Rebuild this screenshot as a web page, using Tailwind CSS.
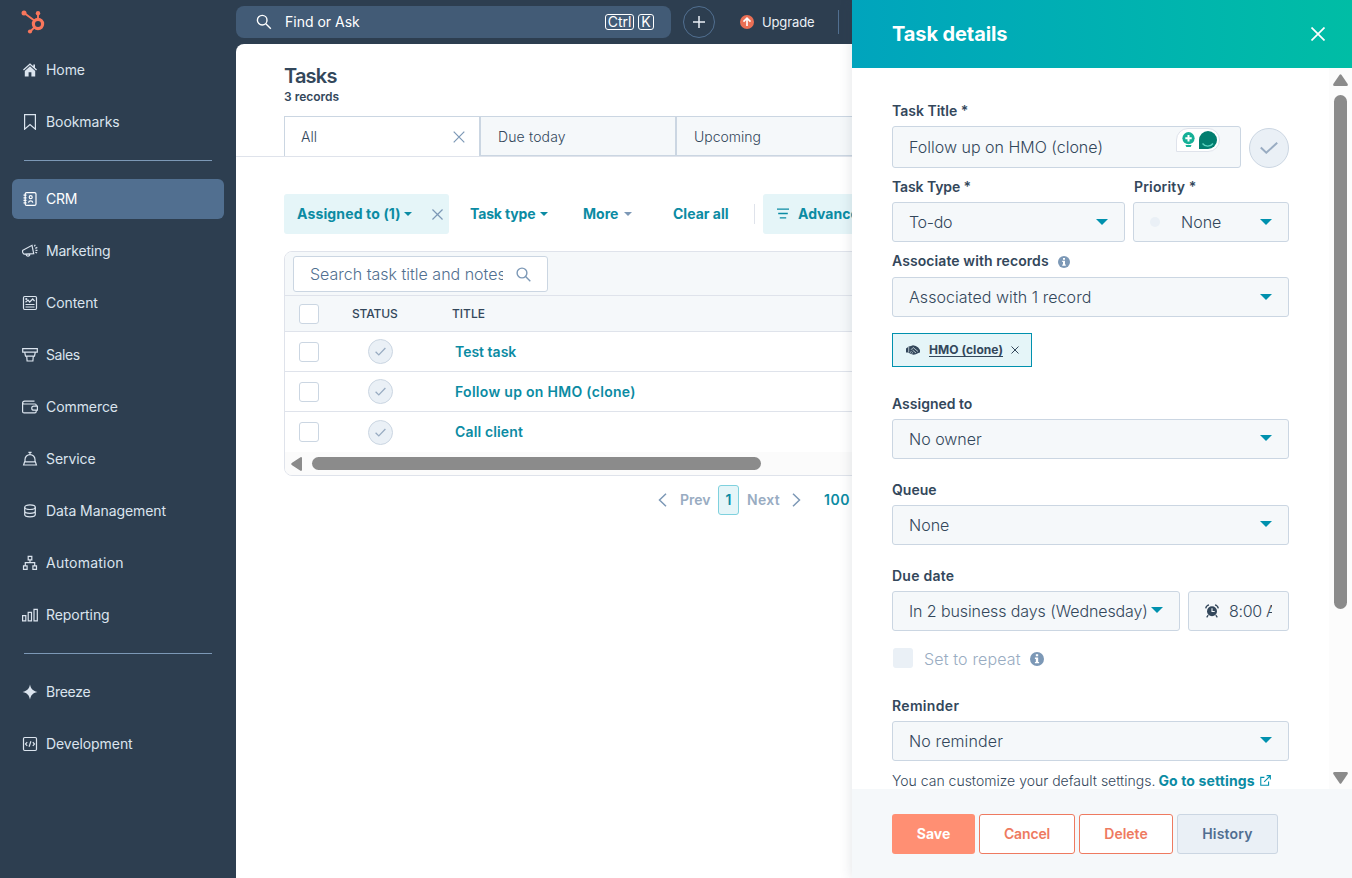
<!DOCTYPE html>
<html lang="en">
<head>
    <meta charset="UTF-8">
    <meta name="viewport" content="width=device-width, initial-scale=1.0">
    <title>Tasks</title>
    <script src="https://cdn.jsdelivr.net/npm/@tailwindcss/browser@4"></script>
</head>
<body class="relative flex h-screen overflow-hidden bg-[#2d3e50] font-['Inter',sans-serif] text-[#33475b]">

    <!-- Sidebar -->
    <nav class="w-[236px] shrink-0 text-sm tracking-[-0.005em] text-[#dbe4ee]">
        <div class="flex h-[50px] pl-[20px] pt-[9px]">
            <svg class="h-[26px] w-[26px]" viewBox="0 0 26 26" fill="none" stroke="#f8765c">
                <circle cx="18" cy="15" r="4.600" stroke-width="3.200"/>
                <path d="M18 10.500V4.500M14.300 11.500 4.500 4.200M14.600 18.200l-4.300 4.300" stroke-width="1.900"/>
                <circle cx="4" cy="4" r="2.500" fill="#f8765c" stroke="none"/>
                <circle cx="18" cy="4.200" r="2.200" fill="#f8765c" stroke="none"/>
                <circle cx="10" cy="22.500" r="2.100" fill="#f8765c" stroke="none"/>
            </svg>
        </div>
        <ul class="flex flex-col gap-3 px-3">
            <li class="flex h-10 items-center gap-2 pl-[10px]">
                <svg class="h-4 w-4" viewBox="0 0 16 16" fill="currentColor"><path d="M8 1.200 1 7.600l.9.900L8 3l6.100 5.500.9-.9-2-1.800V2.500h-1.700v1.700z"/><path d="M8 4.200 2.800 8.900v5.600H6.600V10.300h2.800v4.200h3.800V8.900z"/></svg>
                Home
            </li>
            <li class="flex h-10 items-center gap-2 pl-[10px]">
                <svg class="h-4 w-4" viewBox="0 0 16 16" fill="none" stroke="currentColor" stroke-width="1.200"><path d="M2.600.6h10.800v14.600L8 10.500l-5.400 4.700z"/></svg>
                Bookmarks
            </li>
        </ul>
        <div class="mx-6 mt-[18px] mb-[18px] h-px bg-[#7c98b6]"></div>
        <ul class="flex flex-col gap-3 px-3">
            <li class="flex h-10 items-center gap-2 rounded-md bg-[#516f90] pl-[10px] tracking-[-0.02em] text-white">
                <svg class="h-4 w-4" viewBox="0 0 16 16" fill="none" stroke="currentColor" stroke-width="1.200"><rect x="3.200" y="1.600" width="10.800" height="12.800" rx="1.500"/><path d="M1.500 4.200h3M1.500 6.800h3M1.500 9.300h3M1.500 11.900h3M6.500 11.600c.4-2.200 3.900-2.200 4.300 0"/><circle cx="8.700" cy="6.200" r="1.500"/></svg>
                CRM
            </li>
            <li class="flex h-10 items-center gap-2 pl-[10px] tracking-[-0.015em]">
                <svg class="h-4 w-4" viewBox="0 0 16 16" fill="none" stroke="currentColor" stroke-width="1.200"><path d="M.9 7.200 10 2.300l1.700 8.300-9.400.6C1 11.200 0 8.400.9 7.200zM4 11.200c.2 2.600 3.800 2.600 3.800-.2M12.300 3.400l1-1.700M13.300 5.400l2-1M13.500 7.400h2M13.300 9.200l1.800.7"/></svg>
                Marketing
            </li>
            <li class="flex h-10 items-center gap-2 pl-[10px]">
                <svg class="h-4 w-4" viewBox="0 0 16 16" fill="none" stroke="currentColor" stroke-width="1.200"><rect x="1.500" y="1.500" width="13" height="13" rx="1.200"/><path d="M3.500 7.200 6 5l1.700 2 3-3 1.900 2.200M3.500 9.500h9M3.500 12h9"/><circle cx="4.300" cy="4" r=".5"/></svg>
                Content
            </li>
            <li class="flex h-10 items-center gap-2 pl-[10px] tracking-[-0.03em]">
                <svg class="h-4 w-4" viewBox="0 0 16 16" fill="none" stroke="currentColor" stroke-width="1.200"><path d="M.7 1.700h14.600v3.400H.7zM2.700 5.100l.8 4.100h9l.8-4.100M4.700 9.200l.4 4.800h5.800l.4-4.800"/></svg>
                Sales
            </li>
            <li class="flex h-10 items-center gap-2 pl-[10px]">
                <svg class="h-4 w-4" viewBox="0 0 16 16" fill="none" stroke="currentColor" stroke-width="1.200"><path d="M12.500 2.200H2.600C1.300 2.200.6 3 .6 4v8.400c0 .9.600 1.500 1.500 1.500h10.800c.8 0 1.300-.5 1.300-1.300v-1.400M.6 4c0 .6.700 1 1.500 1h11c.7 0 1.100.5 1.100 1.100v1M15.400 7.100h-3.600a2 2 0 0 0 0 4.100h3.600z"/></svg>
                Commerce
            </li>
            <li class="flex h-10 items-center gap-2 pl-[10px]">
                <svg class="h-4 w-4" viewBox="0 0 16 16" fill="none" stroke="currentColor" stroke-width="1.200"><path d="M6.400 1.300h3.200M8 1.300V3.600M3 10.600V8.500a5 4.900 0 0 1 10 0v2.100M2.600 10.800h10.800l1 3.200H1.600z"/></svg>
                Service
            </li>
            <li class="flex h-10 items-center gap-2 pl-[10px]">
                <svg class="h-4 w-4" viewBox="0 0 16 16" fill="none" stroke="currentColor" stroke-width="1.200"><ellipse cx="8" cy="4.200" rx="5.300" ry="2.300"/><path d="M2.700 4.200v7.400c0 3.100 10.600 3.100 10.600 0V4.200M2.700 8c0 3.100 10.600 3.100 10.600 0"/></svg>
                Data Management
            </li>
            <li class="flex h-10 items-center gap-2 pl-[10px] tracking-[0.016em]">
                <svg class="h-4 w-4" viewBox="0 0 16 16" fill="none" stroke="currentColor" stroke-width="1.200"><path d="M6.200 1.400h3.600v3.500H6.200zM1.500 10.800h3.600v3.500H1.500zM10.900 10.800h3.600v3.500h-3.600zM8 4.900v2.700M3.300 10.800V7.700h9.400v3.100"/></svg>
                Automation
            </li>
            <li class="flex h-10 items-center gap-2 pl-[10px]">
                <svg class="h-4 w-4" viewBox="0 0 16 16" fill="none" stroke="currentColor" stroke-width="1.200"><path d="M.6 8.600h3.200v5.300H.6zM6.200 5.300h3.300v8.600H6.200zM12 2.300h3.300v11.600H12z"/></svg>
                Reporting
            </li>
        </ul>
        <div class="mx-6 mt-[18px] mb-[18px] h-px bg-[#7c98b6]"></div>
        <ul class="flex flex-col gap-3 px-3">
            <li class="flex h-10 items-center gap-2 pl-[10px] tracking-[-0.02em]">
                <svg class="h-4 w-4" viewBox="0 0 16 16" fill="currentColor"><path d="M8 .6c.9 4 2.300 6.200 7.400 7.400C10.300 9.200 8.900 11.400 8 15.400 7.100 11.400 5.700 9.200.6 8 5.700 6.800 7.100 4.600 8 .6z"/></svg>
                Breeze
            </li>
            <li class="flex h-10 items-center gap-2 pl-[10px]">
                <svg class="h-4 w-4" viewBox="0 0 16 16" fill="none" stroke="currentColor" stroke-width="1.200"><rect x="1.500" y="1.500" width="13" height="13" rx="1.200"/><path d="M5.200 6.200 3.500 8l1.700 1.800M10.800 6.200 12.500 8l-1.700 1.800M8.900 5.300 7.100 10.700"/></svg>
                Development
            </li>
        </ul>
    </nav>

    <main class="flex min-w-0 flex-1 flex-col">
        <!-- Top bar -->
        <header class="flex h-11 shrink-0 items-center">
            <div class="flex h-8 w-[435px] items-center rounded-lg bg-[#425b76] pr-[17px] pl-5 text-sm text-white">
                <svg class="h-4 w-4" viewBox="0 0 16 16" fill="none" stroke="currentColor" stroke-width="1.400"><circle cx="6.200" cy="6.200" r="4.800"/><path d="m9.800 9.800 5 5"/></svg>
                <span class="ml-[13px] flex-1">Find or Ask</span>
                <kbd class="flex h-4 w-[29px] items-center justify-center rounded-[3px] border border-white font-['Inter',sans-serif]">Ctrl</kbd>
                <kbd class="ml-1 flex h-4 w-4 items-center justify-center rounded-[3px] border border-white font-['Inter',sans-serif]">K</kbd>
            </div>
            <div class="ml-3 flex h-8 w-8 items-center justify-center rounded-full border border-[#516f90]">
                <svg class="h-3 w-3" viewBox="0 0 12 12" stroke="#eaf0f6" stroke-width="1.500"><path d="M6 0v12M0 6h12"/></svg>
            </div>
            <svg class="ml-[25px] h-[14px] w-[14px]" viewBox="0 0 14 14" fill="none"><circle cx="7" cy="7" r="7" fill="#ea6f55"/><path d="M7 11V3.300M3.500 6.600 7 3.100l3.500 3.500" stroke="#fff" stroke-width="1.600"/></svg>
            <span class="mt-px ml-2 w-[53px] text-[13px] tracking-[-0.01em] text-[#eaf0f6]">Upgrade</span>
            <div class="ml-[23px] h-6 w-px bg-[#516f90]"></div>
        </header>

        <div class="flex-1 rounded-tl-lg bg-white">
            <div class="h-[72px] pt-5 pl-12">
                <h1 class="text-xl leading-6 font-semibold tracking-[-0.04em]">Tasks</h1>
                <p class="text-xs leading-[18px] font-semibold">3 records</p>
            </div>

            <!-- View tabs -->
            <div class="flex h-[41px] border-b border-[#dfe3eb] pl-12 text-sm font-light">
                <div class="flex h-10 w-[195px] items-center justify-between border-t border-l border-[#cbd6e2] pr-[14px] pl-4">
                    All
                    <svg class="h-3 w-3" viewBox="0 0 12 12" stroke="#7c98b6" stroke-width="1.200"><path d="m.7.700 10.600 10.600M11.300.700.7 11.300"/></svg>
                </div>
                <div class="flex h-10 w-[196px] items-center border-y border-l-2 border-[#cbd6e2] bg-[#f5f8fa] pt-px pl-[17px] tracking-[0.01em]">Due today</div>
                <div class="flex h-10 w-[196px] items-center border-y border-l-2 border-[#cbd6e2] bg-[#f5f8fa] pt-px pl-[17px]">Upcoming</div>
            </div>

            <!-- Filters -->
            <div class="mt-[37px] flex h-10 items-center overflow-hidden pl-12 text-sm font-bold whitespace-nowrap text-[#0b8ba3]">
                <div class="flex h-10 w-[165px] items-center rounded-[3px] bg-[#e5f5f8] pl-[13px]">
                    <span class="w-[107px] tracking-[0.01em]">Assigned to (1)</span>
                    <svg class="h-1 w-2" viewBox="0 0 8 4" fill="currentColor"><path d="M0 0h8L4 4z"/></svg>
                    <svg class="ml-5 h-[11px] w-[11px]" viewBox="0 0 12 12" stroke="#7c98b6" stroke-width="1.300"><path d="m.5.500 11 11M11.500.500l-11 11"/></svg>
                </div>
                <span class="ml-[21px] w-[70px] tracking-[-0.01em]">Task type</span>
                <svg class="h-1 w-2" viewBox="0 0 8 4" fill="currentColor"><path d="M0 0h8L4 4z"/></svg>
                <span class="ml-[35px] w-[41px]">More</span>
                <svg class="h-1 w-2" viewBox="0 0 8 4" fill="#7c98b6"><path d="M0 0h8L4 4z"/></svg>
                <span class="ml-[41px] w-[81px]">Clear all</span>
                <div class="h-5 w-px bg-[#dfe3eb]"></div>
                <div class="ml-2 flex h-10 items-center gap-[9px] rounded-[3px] bg-[#e5f5f8] px-[14px]">
                    <svg class="h-3 w-3" viewBox="0 0 12 12" stroke="currentColor" stroke-width="1.300"><path d="M0 1.200h12M1.200 5.500h9.600M2.800 9.800h6.400"/></svg>
                    <span>Advanced filters</span>
                </div>
            </div>

            <!-- Task table -->
            <div class="mt-[17px] ml-12 overflow-hidden rounded-l-lg border border-[#dfe3eb]">
                <div class="flex h-[43px] items-start bg-[#f5f8fa] pt-1 pl-2">
                    <div class="flex h-9 w-[255px] items-center rounded-[3px] border border-[#cbd6e2] bg-white pl-4">
                        <span class="w-[193px] overflow-hidden font-light whitespace-nowrap text-[#516f90]">Search task title and notes</span>
                        <svg class="ml-[13px] h-[15px] w-[15px]" viewBox="0 0 15 15" fill="none" stroke="#7c98b6" stroke-width="1.400"><circle cx="6" cy="6" r="4.900"/><path d="m9.600 9.600 4.700 4.700"/></svg>
                    </div>
                </div>
                <div class="flex h-[37px] items-center border-y border-[#dfe3eb] bg-[#f5f8fa] pl-[14px] text-xs font-medium">
                    <div class="h-5 w-5 rounded-[3px] border border-[#cbd6e2] bg-white"></div>
                    <span class="ml-[33px] w-[100px] tracking-[-0.012em]">STATUS</span>
                    <span>TITLE</span>
                </div>
                <div class="flex h-10 items-center border-b border-[#dfe3eb] pl-[14px]">
                    <div class="h-5 w-5 rounded-[3px] border border-[#cbd6e2]"></div>
                    <div class="ml-[49px] flex h-[25px] w-[25px] items-center justify-center rounded-full border border-[#cbd6e2] bg-[#eaf0f6]">
                        <svg class="h-[9px] w-[11px]" viewBox="0 0 11 9" fill="none" stroke="#99acc2" stroke-width="1.300"><path d="m.6 4.800 3.200 3.100L10.400 1"/></svg>
                    </div>
                    <span class="ml-[62px] text-sm font-semibold text-[#0b8ba3]">Test task</span>
                </div>
                <div class="flex h-10 items-center border-b border-[#dfe3eb] pl-[14px]">
                    <div class="h-5 w-5 rounded-[3px] border border-[#cbd6e2]"></div>
                    <div class="ml-[49px] flex h-[25px] w-[25px] items-center justify-center rounded-full border border-[#cbd6e2] bg-[#eaf0f6]">
                        <svg class="h-[9px] w-[11px]" viewBox="0 0 11 9" fill="none" stroke="#99acc2" stroke-width="1.300"><path d="m.6 4.800 3.200 3.100L10.400 1"/></svg>
                    </div>
                    <span class="ml-[62px] text-sm font-semibold tracking-[0.021em] text-[#0b8ba3]">Follow up on HMO (clone)</span>
                </div>
                <div class="flex h-10 items-center pl-[14px]">
                    <div class="h-5 w-5 rounded-[3px] border border-[#cbd6e2]"></div>
                    <div class="ml-[49px] flex h-[25px] w-[25px] items-center justify-center rounded-full border border-[#cbd6e2] bg-[#eaf0f6]">
                        <svg class="h-[9px] w-[11px]" viewBox="0 0 11 9" fill="none" stroke="#99acc2" stroke-width="1.300"><path d="m.6 4.800 3.200 3.100L10.400 1"/></svg>
                    </div>
                    <span class="ml-[62px] text-sm font-semibold tracking-[0.01em] text-[#0b8ba3]">Call client</span>
                </div>
                <!-- horizontal scrollbar -->
                <div class="flex h-[23px] items-center bg-[#fbfbfb] pl-[6px]">
                    <svg class="h-[14px] w-[11px]" viewBox="0 0 11 14" fill="#8b8b8b"><path d="M9.500.200.7 6.100q-.9.900 0 1.800l8.800 5.900q1.500.4 1.500-1V1.200q0-1.400-1.500-1z"/></svg>
                    <div class="ml-[10px] h-[13px] w-[449px] rounded-full bg-[#8b8b8b]"></div>
                </div>
            </div>

            <!-- Pagination -->
            <div class="mt-[9px] flex h-[30px] items-center pl-[422px] text-sm font-semibold whitespace-nowrap text-[#99acc2]">
                <svg class="h-[14px] w-[9px]" viewBox="0 0 9 14" fill="none" stroke="#7c98b6" stroke-width="1.500"><path d="M8 .7 1.500 7 8 13.300"/></svg>
                <span class="ml-[13px] w-[38px]">Prev</span>
                <span class="flex h-[30px] w-[21px] items-center justify-center rounded-[3px] border border-[#7fd1de] bg-[#e5f5f8] text-[#0b8ba3]">1</span>
                <span class="ml-2 w-[45px] tracking-[0.02em]">Next</span>
                <svg class="h-[14px] w-[9px]" viewBox="0 0 9 14" fill="none" stroke="#7c98b6" stroke-width="1.500"><path d="M1 .7 7.500 7 1 13.300"/></svg>
                <span class="ml-[23px] tracking-[0.04em] text-[#0b8ba3]">100</span>
            </div>
        </div>
    </main>

    <!-- Task details drawer, slides over the page -->
    <aside class="absolute inset-y-0 right-0 flex w-[500px] flex-col bg-white shadow-[0_0_12px_rgba(45,62,80,0.15)]">
        <header class="flex h-[68px] shrink-0 items-center justify-between bg-linear-to-r from-[#00a4bd] to-[#00bda5] pr-[27px] pl-10 text-white">
            <h2 class="text-xl font-bold tracking-[-0.005em]">Task details</h2>
            <svg class="h-[14px] w-[14px]" viewBox="0 0 14 14" stroke="currentColor" stroke-width="1.700"><path d="m.5.500 13 13M13.500.500l-13 13"/></svg>
        </header>

        <div class="flex min-h-0 flex-1">
            <div class="w-[477px] overflow-hidden pt-[33px] pr-10 pl-10 text-sm leading-5">
                <label class="block h-5 font-semibold">Task Title *</label>
                <div class="mt-[5px] flex items-end gap-2">
                    <div class="relative flex h-[42px] w-[349px] items-center rounded-[3px] border border-[#cbd6e2] bg-[#f5f8fa] pl-4 text-base font-light">
                        Follow up on HMO (clone)
                        <!-- writing assistant badge -->
                        <div class="absolute top-px right-[20px] flex h-6 w-[44px] items-center gap-1 rounded-full rounded-bl-none border border-[#dfe3eb] bg-white pl-[5px]">
                            <svg class="h-4 w-[13px]" viewBox="0 0 13 16"><circle cx="6.500" cy="6.200" r="6.100" fill="#15b097"/><path d="M6.500 3v6.400M3.300 6.200h6.400" stroke="#fff" stroke-width="2"/><path d="M3.500 13h6l-.8 2H4.300z" fill="#15b097"/></svg>
                            <svg class="h-[18px] w-[18px]" viewBox="0 0 18 18"><path d="M9 0a9 9 0 1 1 0 18H0V9a9 9 0 0 1 9-9z" fill="#027e6f"/><path d="M3.500 12.500c2.500 3.500 8 3.500 10.500 0" fill="none" stroke="#5bd3bf" stroke-width="1.300"/></svg>
                        </div>
                    </div>
                    <div class="flex h-10 w-10 items-center justify-center rounded-full border border-[#cbd6e2] bg-[#eaf0f6]">
                        <svg class="h-3 w-[18px]" viewBox="0 0 18 12" fill="none" stroke="#99acc2" stroke-width="2"><path d="m.8 5.500 5.500 5.200L17.200.800"/></svg>
                    </div>
                </div>

                <div class="mt-[9px] flex gap-2">
                    <div class="w-[233px]">
                        <label class="block h-5 font-semibold tracking-[-0.008em]">Task Type *</label>
                        <div class="mt-[5px] flex h-10 items-center justify-between rounded-[3px] border border-[#cbd6e2] bg-[#f5f8fa] px-4 text-base font-light">
                            <span class="tracking-[-0.02em]">To-do</span>
                            <svg class="h-[6px] w-3" viewBox="0 0 12 6" fill="#0091ae"><path d="M0 0h12L6 6z"/></svg>
                        </div>
                    </div>
                    <div class="w-[156px]">
                        <label class="block h-5 pl-px font-semibold tracking-[0.012em]">Priority *</label>
                        <div class="mt-[5px] flex h-10 items-center rounded-[3px] border border-[#cbd6e2] bg-[#f5f8fa] px-4 text-base font-light">
                            <span class="h-[10px] w-[10px] rounded-full bg-[#eaf0f6]"></span>
                            <span class="ml-[21px] flex-1">None</span>
                            <svg class="h-[6px] w-3" viewBox="0 0 12 6" fill="#0091ae"><path d="M0 0h12L6 6z"/></svg>
                        </div>
                    </div>
                </div>

                <label class="mt-[9px] flex h-5 items-center gap-[9px] font-semibold">
                    <span class="tracking-[0.006em]">Associate with records</span>
                    <svg class="mt-px h-3 w-3" viewBox="0 0 12 12"><circle cx="6" cy="6" r="6" fill="#7c98b6"/><path d="M5 2h2v1.700H5zM4.200 4.800H7v3.700h.8v1.200H4.200V8.500H5V6h-.8z" fill="#fff"/></svg>
                </label>
                <div class="mt-[6px] flex h-10 items-center justify-between rounded-[3px] border border-[#cbd6e2] bg-[#f5f8fa] px-4 text-base font-light">
                    <span class="tracking-[0.004em]">Associated with 1 record</span>
                    <svg class="h-[6px] w-3" viewBox="0 0 12 6" fill="#0091ae"><path d="M0 0h12L6 6z"/></svg>
                </div>
                <div class="mt-4 flex h-[34px] w-[140px] items-center border border-[#0091ae] bg-[#e5f5f8] pl-[13px] text-xs font-bold">
                    <svg class="h-[10px] w-[14px]" viewBox="0 0 14 10"><path d="M0 3.500 2.800 1.500 5 1l2-.7 2.800.7 2.400 1.500L14 5v2.500l-1.600.5L9.800 9.300 7.600 9.800 5 9 2 7.600 0 7.500z" fill="#33475b"/><path d="M2.700 2v5.500M5 4.800l2.200-2.300 4.800 4M6.500 5l3.500 3M4 7.500l1.500-1M5.500 8.700 7 7.400" fill="none" stroke="#e5f5f8" stroke-width=".7"/></svg>
                    <span class="ml-[9px] tracking-[0.005em] underline underline-offset-2">HMO (clone)</span>
                    <svg class="ml-[8px] h-2 w-2" viewBox="0 0 8 8" stroke="#33475b" stroke-width="1"><path d="m.5.500 7 7M7.500.500l-7 7"/></svg>
                </div>

                <label class="mt-[27px] block h-5 font-semibold">Assigned to</label>
                <div class="mt-[5px] flex h-10 items-center justify-between rounded-[3px] border border-[#cbd6e2] bg-[#f5f8fa] px-4 text-base font-light">
                    <span>No owner</span>
                    <svg class="mb-[3px] h-[6px] w-3" viewBox="0 0 12 6" fill="#0091ae"><path d="M0 0h12L6 6z"/></svg>
                </div>

                <label class="mt-[21px] block h-5 font-semibold">Queue</label>
                <div class="mt-[5px] flex h-10 items-center justify-between rounded-[3px] border border-[#cbd6e2] bg-[#f5f8fa] px-4 text-base font-light">
                    <span>None</span>
                    <svg class="mb-[3px] h-[6px] w-3" viewBox="0 0 12 6" fill="#0091ae"><path d="M0 0h12L6 6z"/></svg>
                </div>

                <label class="mt-[21px] block h-5 font-semibold tracking-[0.018em]">Due date</label>
                <div class="mt-[5px] flex gap-2">
                    <div class="flex h-10 w-[288px] items-center justify-between rounded-[3px] border border-[#cbd6e2] bg-[#f5f8fa] px-4 text-base font-light whitespace-nowrap">
                        <span class="tracking-[-0.006em]">In 2 business days (Wednesday)</span>
                        <svg class="mb-[3px] h-[6px] w-3 shrink-0" viewBox="0 0 12 6" fill="#0091ae"><path d="M0 0h12L6 6z"/></svg>
                    </div>
                    <div class="flex h-10 w-[101px] items-center rounded-[3px] border border-[#cbd6e2] bg-[#f5f8fa] pl-4 text-base font-light">
                        <svg class="h-[14px] w-[14px]" viewBox="0 0 14 14" fill="none" stroke="#33475b"><circle cx="7" cy="7.300" r="5" fill="#33475b" stroke="none"/><path d="M.7 4.300C1 2.500 2.300 1.200 4 .8M13.300 4.300C13 2.500 11.700 1.200 10 .8M3.200 11.200l-1.500 2.100M10.800 11.200l1.500 2.100" stroke-width="1.300"/><path d="M7 4.300v3.200h2.700" stroke="#f5f8fa" stroke-width="1.100"/></svg>
                        <span class="ml-[10px] w-[43px] overflow-hidden tracking-[-0.02em] whitespace-nowrap">8:00 AM</span>
                    </div>
                </div>

                <div class="mt-[17px] flex h-5 items-center pl-px text-base font-light text-[#99acc2]">
                    <span class="h-5 w-5 rounded-[3px] bg-[#eaf0f6]"></span>
                    <span class="mt-[2px] ml-[11px] w-[106px] tracking-[0.01em]">Set to repeat</span>
                    <svg class="mt-px h-[14px] w-[14px]" viewBox="0 0 12 12"><circle cx="6" cy="6" r="6" fill="#7c98b6"/><path d="M5 2h2v1.700H5zM4.200 4.800H7v3.700h.8v1.200H4.200V8.500H5V6h-.8z" fill="#fff"/></svg>
                </div>

                <label class="mt-[28px] block h-5 font-semibold tracking-[0.024em]">Reminder</label>
                <div class="mt-[5px] flex h-10 items-center justify-between rounded-[3px] border border-[#cbd6e2] bg-[#f5f8fa] px-4 text-base font-light">
                    <span class="tracking-[0.008em]">No reminder</span>
                    <svg class="mb-[3px] h-[6px] w-3" viewBox="0 0 12 6" fill="#0091ae"><path d="M0 0h12L6 6z"/></svg>
                </div>
                <p class="mt-[10px] flex h-5 items-center font-light whitespace-nowrap">
                    You can customize your default settings.
                    <a class="ml-[3px] font-bold tracking-[0.01em] text-[#0b8ba3]">Go to settings</a>
                    <svg class="mb-px ml-[5px] h-[11px] w-[11px] shrink-0" viewBox="0 0 10 10" fill="none" stroke="#0091ae" stroke-width="1"><path d="M4 2.200H.7v7.100h7.100V6M6 .6h3.400V4M9.300.700 3.800 6.200"/></svg>
                </p>
            </div>
            <!-- vertical scrollbar -->
            <div class="flex w-[23px] flex-col items-center bg-[#fcfcfc] pt-[6px]">
                <svg class="h-3 w-[15px] shrink-0" viewBox="0 0 15 12" fill="#8b8b8b"><path d="M6.600.800Q7.500-.200 8.400.800l6.300 9.200q.6 2-1.200 2H1.500Q-.3 12 .3 10z"/></svg>
                <div class="mt-[9px] h-[514px] w-[13px] shrink-0 rounded-full bg-[#8b8b8b]"></div>
                <svg class="mt-[163px] h-3 w-[15px] shrink-0" viewBox="0 0 15 12" fill="#8b8b8b"><path d="M6.600 11.200q.9 1 1.800 0L14.700 2q.6-2-1.200-2H1.500Q-.3 0 .3 2z"/></svg>
            </div>
        </div>

        <footer class="flex h-[89px] shrink-0 gap-1 bg-[#f5f8fa] pt-[25px] pl-10 text-sm font-semibold">
            <button class="h-10 w-[83px] rounded-[3px] bg-[#ff8f73] font-bold text-white">Save</button>
            <button class="h-10 w-24 rounded-[3px] border border-[#ee7a60] bg-white tracking-[-0.01em] text-[#ee7a60]">Cancel</button>
            <button class="h-10 w-[94px] rounded-[3px] border border-[#ee7a60] bg-white text-[#ee7a60]">Delete</button>
            <button class="h-10 w-[101px] rounded-[3px] border border-[#cbd6e2] bg-[#eaf0f6] tracking-[0.014em] text-[#506e91]">History</button>
        </footer>
    </aside>
</body>
</html>
